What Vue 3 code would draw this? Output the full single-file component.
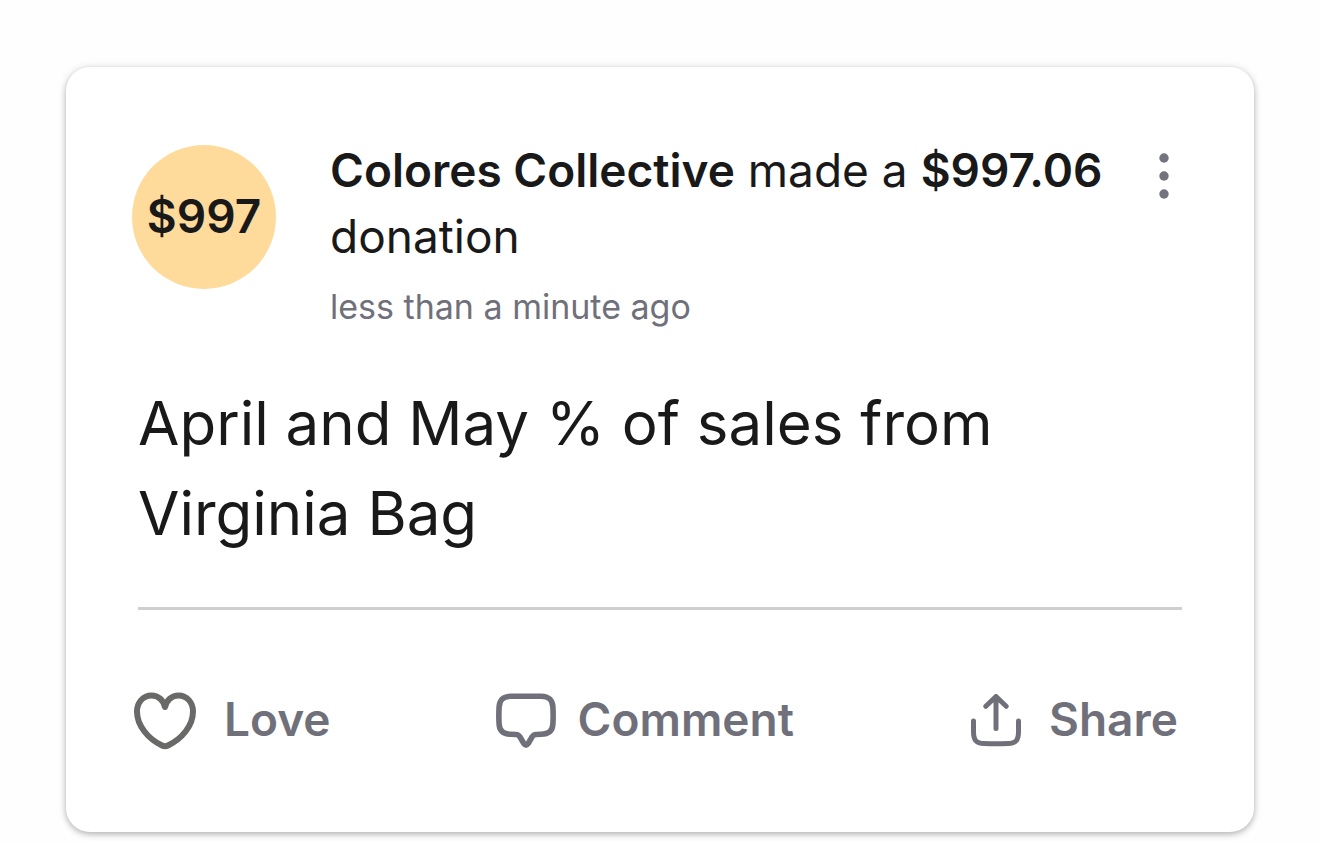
<script setup>
const amountShort = '$997'
const donor = 'Colores Collective'
const amount = '$997.06'
</script>

<template>
  <main class="page">
    <article class="card">
      <header class="head">
        <div class="avatar">{{ amountShort }}</div>
        <div class="summary">
          <p class="title"><strong>{{ donor }}</strong> made a <strong>{{ amount }}</strong> donation</p>
          <p class="time">less than a minute ago</p>
        </div>
        <button class="more" type="button" aria-label="More options">
          <svg width="10" height="46" viewBox="0 0 10 46" fill="currentColor" aria-hidden="true">
            <circle cx="5" cy="5" r="4.7" />
            <circle cx="5" cy="23" r="4.7" />
            <circle cx="5" cy="41" r="4.7" />
          </svg>
        </button>
      </header>

      <p class="message">April and May % of sales from Virginia Bag</p>

      <footer class="actions">
        <button class="action love" type="button">
          <svg width="62" height="58" viewBox="0 0 62 58" fill="none" stroke="currentColor" stroke-width="6" stroke-linecap="round" stroke-linejoin="round" aria-hidden="true">
            <path d="M31 15C29.500 8 24 3.500 17.500 3.500C9 3.500 3 10.500 3 19.500C3 34 14.500 47 28 53.500Q31 55 34 53.500C47.500 47 59 34 59 19.500C59 10.500 53 3.500 44.500 3.500C38 3.500 32.500 8 31 15Z" />
          </svg>
          <span>Love</span>
        </button>
        <button class="action comment" type="button">
          <svg width="60" height="56" viewBox="0 0 60 56" fill="none" stroke="currentColor" stroke-width="5.600" stroke-linecap="round" stroke-linejoin="round" aria-hidden="true">
            <path d="M15 3.200H45C53 3.500 56.500 6.500 56.900 14Q57.400 22.500 56.900 31C56.500 38 53 41 45 41.300L40 41.500Q37.500 41.600 36 44L32.200 50.500Q30 53.800 27.800 50.500L24 44Q22.500 41.600 20 41.500L15 41.300C7 41 3.500 38 3.100 31Q2.600 22.500 3.100 14C3.500 6.500 7 3.500 15 3.200Z" />
          </svg>
          <span>Comment</span>
        </button>
        <button class="action share" type="button">
          <svg width="50" height="54" viewBox="0 0 50 54" fill="none" stroke="currentColor" stroke-width="5" stroke-linecap="round" stroke-linejoin="round" aria-hidden="true">
            <path d="M25 34.500V2.500M14.800 12.300L25 2.500L35.200 12.300" />
            <path d="M2.500 27V38C2.500 46.500 5.500 49.300 13 49.600Q25 50 37 49.600C44.500 49.300 47.500 46.500 47.500 38V27" />
          </svg>
          <span>Share</span>
        </button>
      </footer>
    </article>
  </main>
</template>

<style>
html,
body {
  background: #fefefe;
}
</style>

<style scoped>
.page {
  box-sizing: border-box;
  min-height: 100vh;
  padding: 67px 66px 10px;
  font-family: Inter, "Liberation Sans", sans-serif;
  color: #19191a;
}

.card {
  padding: 70px 66px 76px;
  border-radius: 24px;
  background: #fff;
  box-shadow: 0 2px 6px rgba(0, 0, 0, 0.3), 0 0 14px rgba(0, 0, 0, 0.04);
}

p {
  margin: 0;
}

.head {
  display: flex;
  align-items: flex-start;
}

.avatar {
  display: flex;
  box-sizing: border-box;
  flex: none;
  align-items: center;
  justify-content: center;
  width: 144px;
  height: 144px;
  margin: 8px 54px 0 0;
  padding-bottom: 2px;
  border-radius: 50%;
  background: #fedb9b;
  font-size: 46px;
  font-weight: 600;
}

.summary {
  flex: 1;
  min-width: 0;
}

.title {
  font-size: 46px;
  line-height: 66px;
}

.title strong {
  font-weight: 600;
}

.time {
  margin-top: 16px;
  font-size: 34px;
  line-height: 44px;
  color: #70707b;
}

.more {
  display: flex;
  flex: none;
  margin: 16px 19px 0 12px;
  padding: 0;
  border: 0;
  background: none;
  color: #74747e;
  cursor: pointer;
}

.message {
  margin: 49px 6px;
  padding-right: 150px;
  font-size: 60px;
  line-height: 90px;
}

.actions {
  display: flex;
  justify-content: space-between;
  margin: 0 6px;
  padding-top: 76px;
  border-top: 3px solid #cfcfcf;
}

.action {
  display: flex;
  align-items: center;
  gap: 28px;
  height: 70px;
  padding: 0;
  border: 0;
  background: none;
  font-family: inherit;
  font-size: 46px;
  font-weight: 600;
  color: #70707b;
  cursor: pointer;
}

.action span {
  padding-bottom: 4px;
}

.action svg {
  flex: none;
}

.love {
  margin-left: -4px;
}

.love svg {
  color: #696968;
}

.comment {
  gap: 22px;
  margin-right: 12px;
}

.share {
  margin-right: 4px;
}
</style>
